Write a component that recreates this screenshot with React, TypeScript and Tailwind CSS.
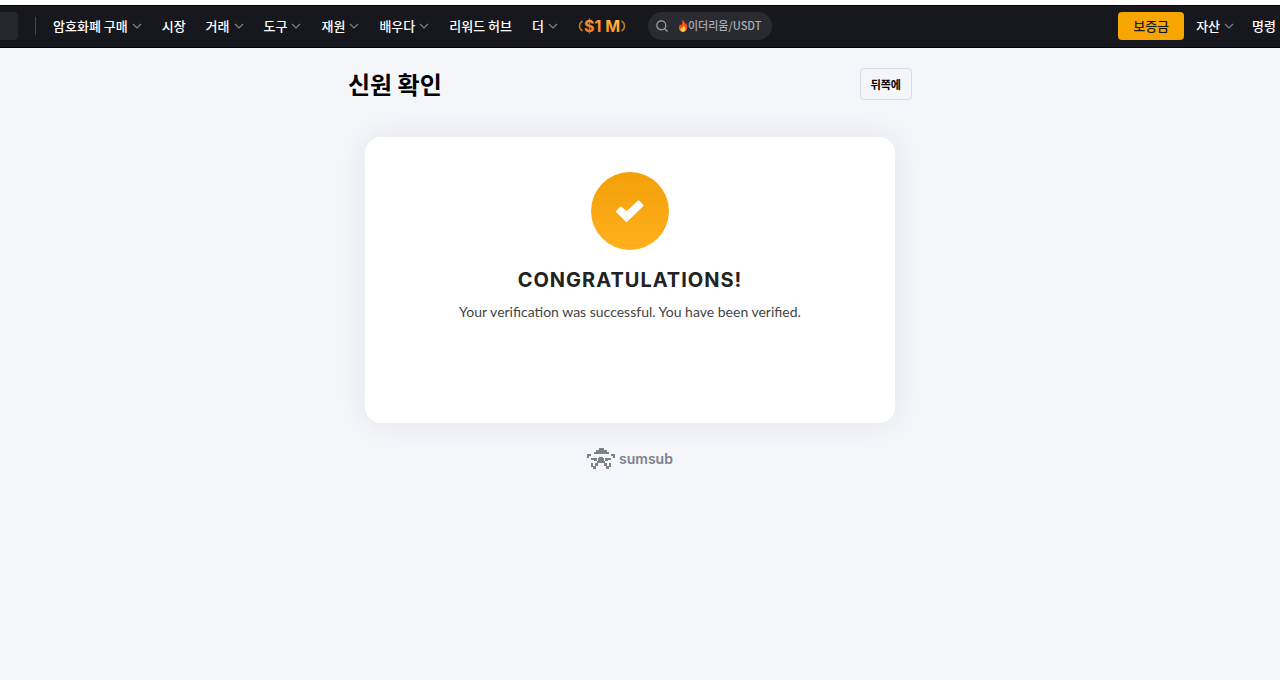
import type { ReactNode } from 'react';

interface NavItem {
  label: string;
  hasMenu?: boolean;
}

const navItems: NavItem[] = [
  { label: '암호화폐 구매', hasMenu: true },
  { label: '시장' },
  { label: '거래', hasMenu: true },
  { label: '도구', hasMenu: true },
  { label: '재원', hasMenu: true },
  { label: '배우다', hasMenu: true },
  { label: '리워드 허브' },
  { label: '더', hasMenu: true },
];

function ChevronIcon() {
  return (
    <svg viewBox="0 0 10 6" className="h-1.5 w-2.5 shrink-0" fill="none" aria-hidden="true">
      <path d="M1 1l4 4 4-4" stroke="#81858c" strokeWidth="1.1" />
    </svg>
  );
}

function NavButton({ children }: { children: ReactNode }) {
  return (
    <button type="button" className="flex shrink-0 items-center gap-1 whitespace-nowrap">
      {children}
      <ChevronIcon />
    </button>
  );
}

function PromoBadge() {
  return (
    <a href="#promo" className="shrink-0" aria-label="$1M">
      <svg viewBox="0 0 48 20" className="h-5 w-12">
        <defs>
          <linearGradient id="promo" x1="0" x2="1" y1="1" y2="0">
            <stop offset="0" stopColor="#f26a1b" />
            <stop offset="0.45" stopColor="#fb9328" />
            <stop offset="1" stopColor="#ffd23c" />
          </linearGradient>
        </defs>
        <g fill="none" stroke="#b9781f" strokeWidth="1.5">
          <path d="M4.500 5C0.500 7.500 0.500 12.500 4.500 15" />
          <path d="M43.500 5C47.500 7.500 47.500 12.500 43.500 15" />
        </g>
        <text x="6" y="16" fill="url(#promo)" fontSize="16" fontWeight="700" fontFamily="Inter, sans-serif">
          $1 M
        </text>
      </svg>
    </a>
  );
}

function FlameIcon() {
  return (
    <svg viewBox="0 0 10 13" className="h-3 w-2.5 shrink-0" aria-hidden="true">
      <path d="M4 0C7 1.500 7 3.500 7.500 4.500C8 4 8 3.500 8 3C9.500 5 10 7 9.500 9C9 11.500 7.500 13 5 13S0.500 11.500 0.500 8.500C0.500 6.500 1.500 5.500 2 4.500C2.500 5 2.500 5.500 3 6C4.500 4 4.500 2 4 0Z" fill="#f4511e" />
      <path d="M5.500 6C7.500 8 8 9 7.500 10.500C7 12 6 12.700 5 12.700S2.500 12 2.300 10C2.200 9 2.700 8.500 3 8C3.500 8.500 3.600 8.700 4 9C5 8 5.500 7 5.500 6Z" fill="#ffd54a" />
    </svg>
  );
}

function SearchBox() {
  return (
    <label className="flex h-7 w-[124px] shrink-0 items-center rounded-full bg-[#2a2b30] pr-1 pl-2">
      <svg viewBox="0 0 12 12" className="size-3 shrink-0" fill="none" stroke="#a3a6ad" strokeWidth="1.2" aria-hidden="true">
        <circle cx="5.300" cy="5.300" r="4.500" />
        <path d="M8.500 8.500l3 3" />
      </svg>
      <span className="w-2.5 shrink-0" />
      <FlameIcon />
      <input
        type="text"
        aria-label="검색"
        placeholder="이더리움/USDT"
        className="min-w-0 flex-1 bg-transparent text-[11px] font-medium outline-none placeholder:text-[#a9adb6]"
      />
    </label>
  );
}

function Header() {
  return (
    <header className="flex h-[43px] items-center overflow-hidden border-y border-[#050608] bg-[#17181d] pr-1 pb-0.5 text-[13px] font-medium text-white">
      <div className="h-7 w-[18px] shrink-0 rounded-r-sm bg-[#24272c]" />
      <div className="mr-[17px] ml-[17px] h-[18px] w-px shrink-0 bg-[#43464c]" />
      <nav className="flex shrink-0 items-center gap-5">
        {navItems.map(({ label, hasMenu }) =>
          hasMenu ? (
            <NavButton key={label}>{label}</NavButton>
          ) : (
            <a key={label} href="#nav" className="shrink-0 whitespace-nowrap">
              {label}
            </a>
          )
        )}
        <span className="flex items-center gap-[22px]">
          <PromoBadge />
          <SearchBox />
        </span>
      </nav>
      <div className="ml-auto flex shrink-0 items-center">
        <button type="button" className="mr-3 h-7 w-[66px] rounded-sm bg-[#f7a600] text-[#17181d]">
          보증금
        </button>
        <NavButton>자산</NavButton>
        <a href="#orders" className="ml-[18px] whitespace-nowrap">
          명령
        </a>
      </div>
    </header>
  );
}

function SumsubLogo() {
  return (
    <a href="#sumsub" className="flex items-center gap-1 text-[#7c818e]">
      <svg viewBox="0 0 28 22" className="h-[22px] w-7" fill="currentColor" aria-hidden="true">
        <path d="M12 0h5v2h3v2h2v2H7V4h2V2h3z" />
        <path d="M0 6h4v2H2v2H0zM24 6h4v4h-2V8h-2z" />
        <path d="M4 10h6v3H7v-1H4zM18 10h6v2h-3v1h-3z" />
        <path d="M12 9h4v1h1v3h1v2h2v3h-3v-3h-6v3H8v-3h2v-2h1v-3h1z" />
        <path d="M4 15h2v3h3v3H6v-2H4zM22 15h2v4h-2v2h-3v-3h3z" />
      </svg>
      <span className="font-[Inter,sans-serif] text-sm font-semibold">sumsub</span>
    </a>
  );
}

export default function App() {
  return (
    <div className="min-h-screen bg-[#f5f6fa] font-['Noto_Sans_CJK_KR',sans-serif] text-black">
      <div className="h-[5px] bg-white" />
      <Header />
      <main className="pt-5 pr-5">
        <div className="mx-auto max-w-[564px]">
          <div className="flex items-center justify-between">
            <h1 className="text-2xl font-bold">신원 확인</h1>
            <button
              type="button"
              className="h-8 rounded-sm border border-[#d9dbe2] px-2.5 text-[11px] font-bold"
            >
              뒤쪽에
            </button>
          </div>
          <section className="mx-[17px] mt-[37px] flex flex-col items-center rounded-2xl bg-white pt-[35px] pb-[101px] font-[Inter,sans-serif] shadow-[0_0_30px_rgba(30,35,60,0.08)]">
            <div className="flex size-[78px] items-center justify-center rounded-full bg-linear-to-b from-[#f3a006] to-[#ffb01c]">
              <svg viewBox="0 0 28 22" className="h-[22px] w-7" fill="white" stroke="white" strokeWidth="2" strokeLinejoin="round" aria-hidden="true">
                <path d="M1 11.500L5 7.500L10.500 12.500L22.500 1.500L26.500 5.500L10.500 21Z" />
              </svg>
            </div>
            <h2 className="mt-4 text-xl leading-7 font-bold tracking-wider text-[#222]">
              CONGRATULATIONS!
            </h2>
            <p className="mt-2 font-[Lato,sans-serif] text-sm leading-5 text-[#444]">
              Your verification was successful. You have been verified.
            </p>
          </section>
          <div className="mt-[25px] flex justify-center">
            <SumsubLogo />
          </div>
        </div>
      </main>
    </div>
  );
}
